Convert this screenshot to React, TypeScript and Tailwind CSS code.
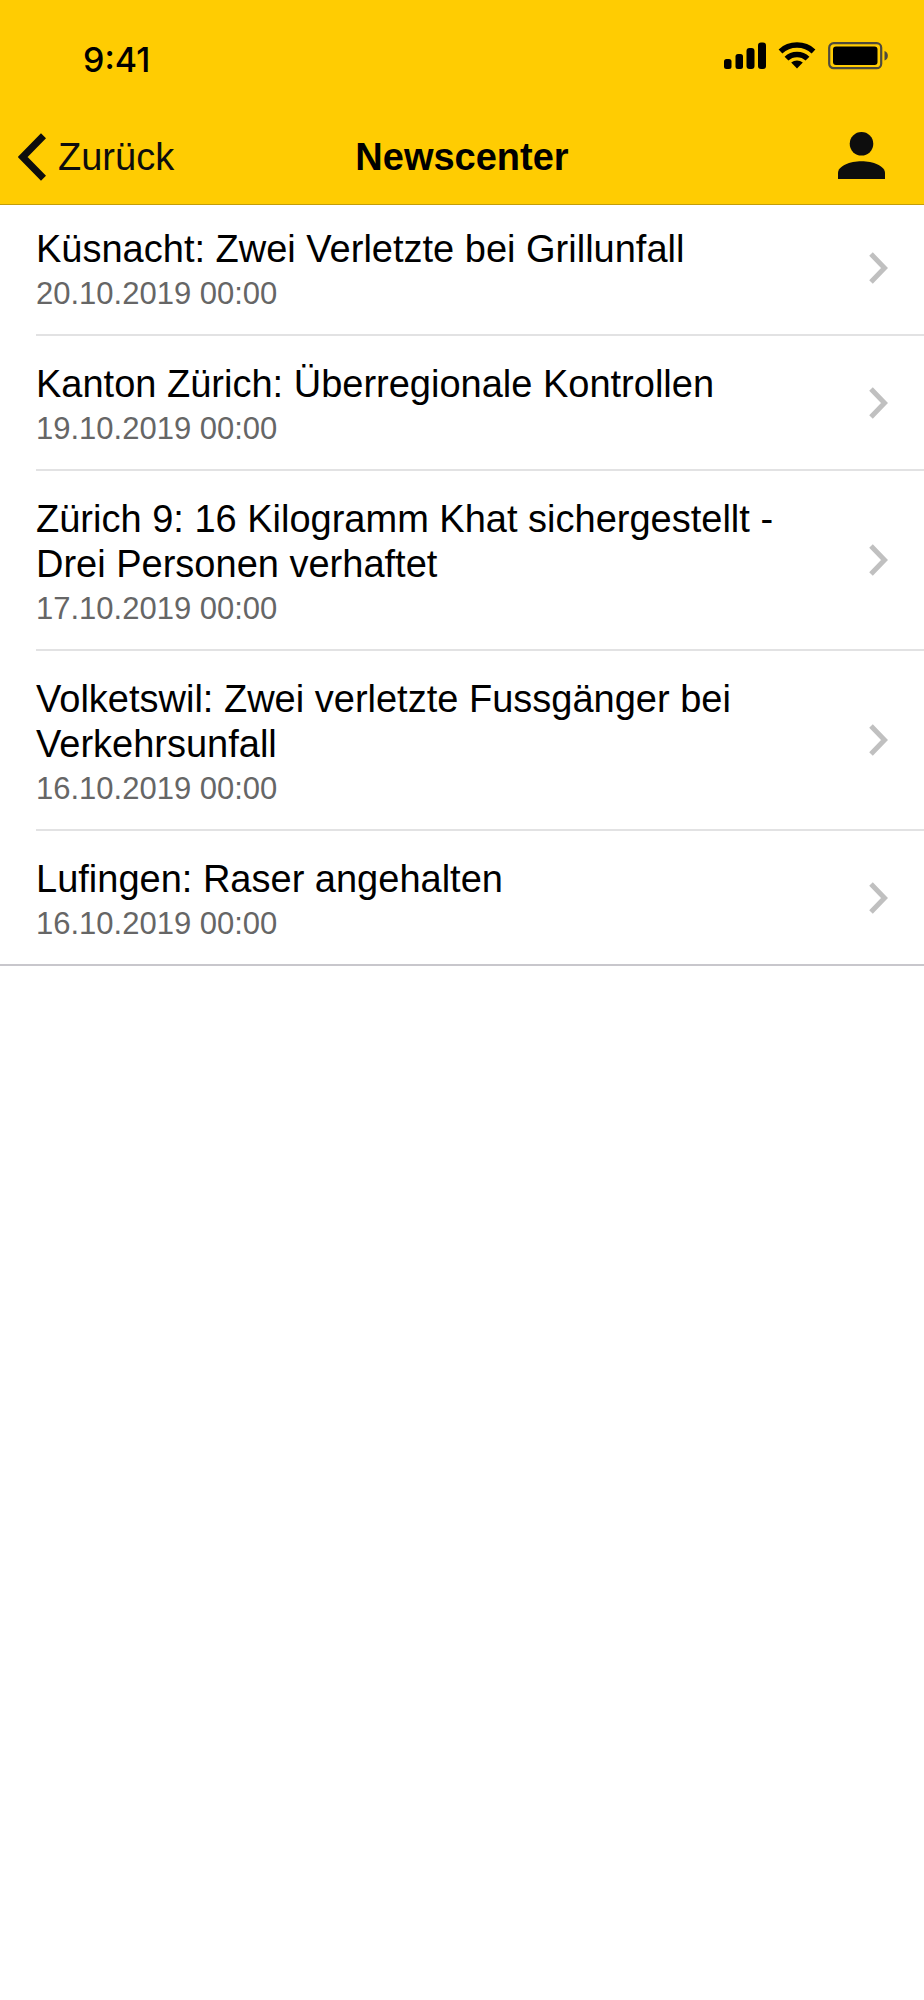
type NewsItem = {
  id: number;
  title: string;
  date: string;
};

const news: NewsItem[] = [
  {
    id: 1,
    title: 'Küsnacht: Zwei Verletzte bei Grillunfall',
    date: '20.10.2019 00:00',
  },
  {
    id: 2,
    title: 'Kanton Zürich: Überregionale Kontrollen',
    date: '19.10.2019 00:00',
  },
  {
    id: 3,
    title: 'Zürich 9: 16 Kilogramm Khat sichergestellt - Drei Personen verhaftet',
    date: '17.10.2019 00:00',
  },
  {
    id: 4,
    title: 'Volketswil: Zwei verletzte Fussgänger bei Verkehrsunfall',
    date: '16.10.2019 00:00',
  },
  {
    id: 5,
    title: 'Lufingen: Raser angehalten',
    date: '16.10.2019 00:00',
  },
];

function SignalIcon() {
  return (
    <svg width="42" height="28" viewBox="0 0 42 28" aria-hidden="true">
      <rect x="0" y="17" width="7.5" height="10" rx="2.5" />
      <rect x="11.5" y="12" width="7.5" height="15" rx="2.5" />
      <rect x="22.5" y="6" width="8" height="21" rx="3" />
      <rect x="34" y="0.5" width="8" height="26.5" rx="3" />
    </svg>
  );
}

function WifiIcon() {
  return (
    <svg width="38" height="28" viewBox="0 0 38 28" aria-hidden="true">
      <g fill="none" stroke="currentColor" strokeWidth="5.5">
        <path d="M2.500 9.400C11.500 1 26.500 1 35.500 9.400" />
        <path d="M8.500 16.600C14.200 11 23.800 11 29.500 16.600" />
      </g>
      <path d="M13.200 20.600C16.700 17.800 21.300 17.800 24.800 20.600L19 26.600Z" />
    </svg>
  );
}

function BatteryIcon() {
  return (
    <svg width="62" height="28" viewBox="0 0 62 28" aria-hidden="true">
      <rect
        x="1.200"
        y="1.200"
        width="52"
        height="25"
        rx="4.500"
        fill="none"
        stroke="#4f4a3c"
        strokeWidth="2.200"
      />
      <rect x="5" y="4.500" width="44.500" height="18.500" rx="3" />
      <path d="M56.500 9C61 10 61 17.500 56.500 18.500Z" fill="#4f4a3c" />
    </svg>
  );
}

function StatusBar() {
  return (
    <div className="flex h-[110px] items-center justify-between pt-2 pr-[34px] pl-[83px]">
      <span className="font-[Inter,sans-serif] text-[34px] font-medium">
        9:41
      </span>
      <div className="flex items-center gap-3 pb-1.5">
        <SignalIcon />
        <WifiIcon />
        <BatteryIcon />
      </div>
    </div>
  );
}

function NavBar() {
  return (
    <nav className="grid h-[94px] grid-cols-3 items-center text-[38px] leading-[45px]">
      <button
        type="button"
        className="flex items-center gap-3 justify-self-start pl-[18px] text-[#0d0d0d]"
      >
        <svg width="28" height="48" viewBox="0 0 28 48" aria-hidden="true">
          <path
            d="M25.500 2.700L4.700 24L25.500 45.300"
            fill="none"
            stroke="currentColor"
            strokeWidth="7"
          />
        </svg>
        Zurück
      </button>
      <h1 className="text-center font-bold">Newscenter</h1>
      <button
        type="button"
        aria-label="Profil"
        className="justify-self-end pr-[39px] pb-1 text-[#0d0d0d]"
      >
        <svg
          width="47"
          height="47"
          viewBox="0 0 47 47"
          fill="currentColor"
          aria-hidden="true"
        >
          <circle cx="23.500" cy="11.800" r="11.800" />
          <path d="M0 47V41C0 34 12 29.300 23.500 29.300S47 34 47 41V47Z" />
        </svg>
      </button>
    </nav>
  );
}

function NewsRow({ item }: { item: NewsItem }) {
  return (
    <li className="ml-9 border-b-2 border-[#e2e2e3] last:ml-0 last:border-[#c8c7cc] last:pl-9">
      <a href="#" className="flex items-center pr-9">
        <div className="flex-1 pt-[26px] pr-14 pb-[19px]">
          <h2 className="text-[38px] leading-[45px]">{item.title}</h2>
          <p className="text-[31px] leading-[43px] text-[#666]">{item.date}</p>
        </div>
        <svg
          width="19"
          height="32"
          viewBox="0 0 19 32"
          className="shrink-0"
          aria-hidden="true"
        >
          <path
            d="M2 2L15.500 16L2 30"
            fill="none"
            stroke="#c0c0c0"
            strokeWidth="5"
          />
        </svg>
      </a>
    </li>
  );
}

export default function App() {
  return (
    <div className="min-h-screen bg-white font-['Liberation_Sans',Arial,sans-serif] text-black">
      <header className="sticky top-0 z-10 border-b border-[#c39d0a] bg-[#ffcc02]">
        <StatusBar />
        <NavBar />
      </header>
      {/* the first row tucks slightly under the bar */}
      <ul className="-mt-1">
        {news.map((item) => (
          <NewsRow key={item.id} item={item} />
        ))}
      </ul>
    </div>
  );
}
